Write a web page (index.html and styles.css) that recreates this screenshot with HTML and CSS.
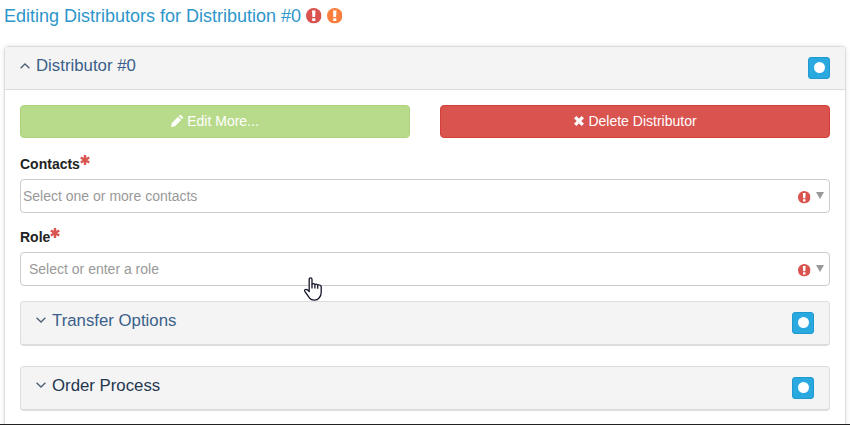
FILE: index.html
```html
<!DOCTYPE html>
<html lang="en">
<head>
<meta charset="utf-8">
<title>Editing Distributors</title>
<link rel="stylesheet" href="styles.css">
</head>
<body>
<svg class="defs" aria-hidden="true">
  <symbol id="alert" viewBox="0 0 16 16"><circle cx="8" cy="8" r="8" fill="currentColor"/><path d="M6.2 2.5h3.6l-.4 6.8H6.6zM6.4 10.5h3.2v2.8H6.4z" fill="#fff"/></symbol>
  <symbol id="star" viewBox="0 0 10 10"><path d="M5 0v10M.8 2.4l8.4 5.2M9.2 2.4L.8 7.6" stroke="currentColor" stroke-width="2.4" fill="none"/></symbol>
  <symbol id="down" viewBox="0 0 10 6"><path d="M.6.7L5 5 9.4.7" stroke="currentColor" stroke-width="1.3" fill="none"/></symbol>
  <symbol id="up" viewBox="0 0 10 6"><path d="M.6 5.3L5 1l4.4 4.3" stroke="currentColor" stroke-width="1.3" fill="none"/></symbol>
</svg>
<main class="page">
  <h1 class="title"><span>Editing Distributors for Distribution #0</span><svg class="alert-lg error"><use href="#alert"/></svg><svg class="alert-lg warning"><use href="#alert"/></svg></h1>
  <section class="panel">
    <header class="panel-head">
      <svg class="chevron"><use href="#up"/></svg><h2 class="heading">Distributor #0</h2>
      <button class="dot-btn"><span class="dot"></span></button>
    </header>
    <div class="panel-body">
      <div class="actions">
        <button class="btn edit"><svg class="pencil" viewBox="0 0 12 12"><path d="M0 12l.8-4L7 1.8 10.2 5 4 11.2zM7.8 1L8.7.2q.7-.4 1.3 0l1.8 1.8q.4.7 0 1.3l-.8.9z" fill="#fff"/></svg>Edit More...</button>
        <button class="btn delete"><svg class="cross" viewBox="0 0 10 10"><path d="M1.2 1.2l7.6 7.6M8.8 1.2L1.2 8.8" stroke="#fff" stroke-width="3.3"/></svg>Delete Distributor</button>
      </div>
      <label class="label">Contacts<svg class="star"><use href="#star"/></svg></label>
      <div class="select contacts"><span class="placeholder">Select one or more contacts</span><svg class="alert-sm"><use href="#alert"/></svg><span class="caret"></span></div>
      <label class="label">Role<svg class="star"><use href="#star"/></svg></label>
      <div class="select role"><span class="placeholder">Select or enter a role</span><svg class="alert-sm"><use href="#alert"/></svg><span class="caret"></span></div>
      <div class="subpanel"><svg class="chevron"><use href="#down"/></svg><h3 class="heading">Transfer Options</h3><button class="dot-btn"><span class="dot"></span></button></div>
      <div class="subpanel focused"><svg class="chevron"><use href="#down"/></svg><h3 class="heading">Order Process</h3><button class="dot-btn"><span class="dot"></span></button></div>
    </div>
  </section>
</main>
<svg class="cursor" viewBox="0 0 18 24"><path d="M5.2 14.5V2.4q0-1.6 1.4-1.6T8 2.4v4.7q1.6-1 2.9.3 1.7-.7 2.7.5 2.6-.4 3.6 1.5v6q0 3.4-2.3 5.8-1.3 2-4.5 2-3.4 0-4.8-2L1 14.6q-.9-1.6.3-2.1 1.2-.4 2.4.6z" fill="#fff" stroke="#15152b" stroke-width="1.3" stroke-linejoin="round"/><path d="M8 7v4.5M10.9 7.4v4.2M13.7 8v3.7" fill="none" stroke="#15152b" stroke-width="1.3"/></svg>
</body>
</html>
```
FILE: styles.css
```css
* { box-sizing: border-box; }
body {
  margin: 0;
  height: 425px;
  overflow: hidden;
  background: #fff;
  color: #222;
  font: 14px/20px "Liberation Sans", Arial, sans-serif;
}
h1, h2, h3 { margin: 0; font-weight: 400; }
svg { display: block; flex: none; }
.defs { display: none; }
.page {
  height: 425px;
  padding: 6px 4px 0;
  overflow: hidden;
  border-bottom: 1px solid #222;
}
.title {
  display: flex;
  height: 40px;
  color: #2d96cb;
  font-size: 18px;
  line-height: 20px;
}
.alert-lg { width: 15.5px; height: 15.5px; margin: 2px 0 0 5px; }
.error, .alert-sm { color: #d9534f; }
.warning { color: #fb7e3c; }
.panel {
  height: 400px;
  border: 1px solid #ddd;
  border-radius: 4px;
  box-shadow: 0 0 5px rgba(0, 0, 0, .1);
}
.panel-head {
  display: flex;
  height: 43px;
  padding: 10px 15px 0;
  background: #f4f4f4;
  border-bottom: 1px solid #ddd;
  border-radius: 3px 3px 0 0;
}
.chevron { width: 10px; height: 6px; margin: 5px 6px 0 0; color: #4b5e73; }
.heading {
  flex: 1;
  margin-top: -1px;
  color: #3a5f8a;
  font-size: 16.8px;
  line-height: 20px;
}
.panel-head .chevron { margin-top: 6px; }
.dot-btn {
  display: grid;
  place-items: center;
  width: 22px;
  height: 22px;
  padding: 0 0 1px 1px;
  background: #29a9e0;
  border: 1px solid #1e9acf;
  border-radius: 3px;
}
.dot { width: 11px; height: 11px; background: #fff; border-radius: 50%; }
.panel-body { padding: 15px; }
.actions { display: flex; gap: 30px; }
.btn {
  display: flex;
  flex: 1;
  height: 33px;
  align-items: center;
  justify-content: center;
  padding: 0 0 2px;
  border: 1px solid;
  border-radius: 4px;
  color: #fff;
  font: inherit;
}
.edit { background: #b8da8b; border-color: #aed27c; }
.delete { background: #d9534f; border-color: #d43f3a; }
.pencil { width: 12px; height: 12px; margin-right: 4px; }
.cross { width: 10px; height: 10px; margin: 1px 4px 0 1px; }
.label {
  display: flex;
  height: 25px;
  margin-top: 16px;
  font-weight: 700;
}
.star { width: 10px; height: 10px; margin-top: 1px; color: #d9534f; }
.select {
  display: flex;
  height: 34px;
  padding: 6px 5px 0 2px;
  border: 1px solid #ccc;
  border-radius: 4px;
  color: #999;
}
.contacts + .label { margin-top: 14px; }
.role { padding-left: 8px; }
.placeholder { flex: 1; }
.alert-sm { width: 12.5px; height: 12.5px; margin: 5px 5.5px 0 0; }
.caret {
  width: 8px;
  height: 7px;
  margin-top: 6px;
  background: #999;
  clip-path: polygon(0 0, 100% 0, 50% 100%);
}
.subpanel {
  display: flex;
  height: 45px;
  margin-top: 15px;
  padding: 10px 15px 0;
  background: #f4f4f4;
  border: 1px solid #ddd;
  border-bottom-width: 2px;
  border-radius: 4px;
}
.subpanel + .subpanel { margin-top: 20px; }
.focused .heading { color: #23364f; }
.cursor { position: absolute; left: 304px; top: 277px; width: 18px; height: 24px; }
```
